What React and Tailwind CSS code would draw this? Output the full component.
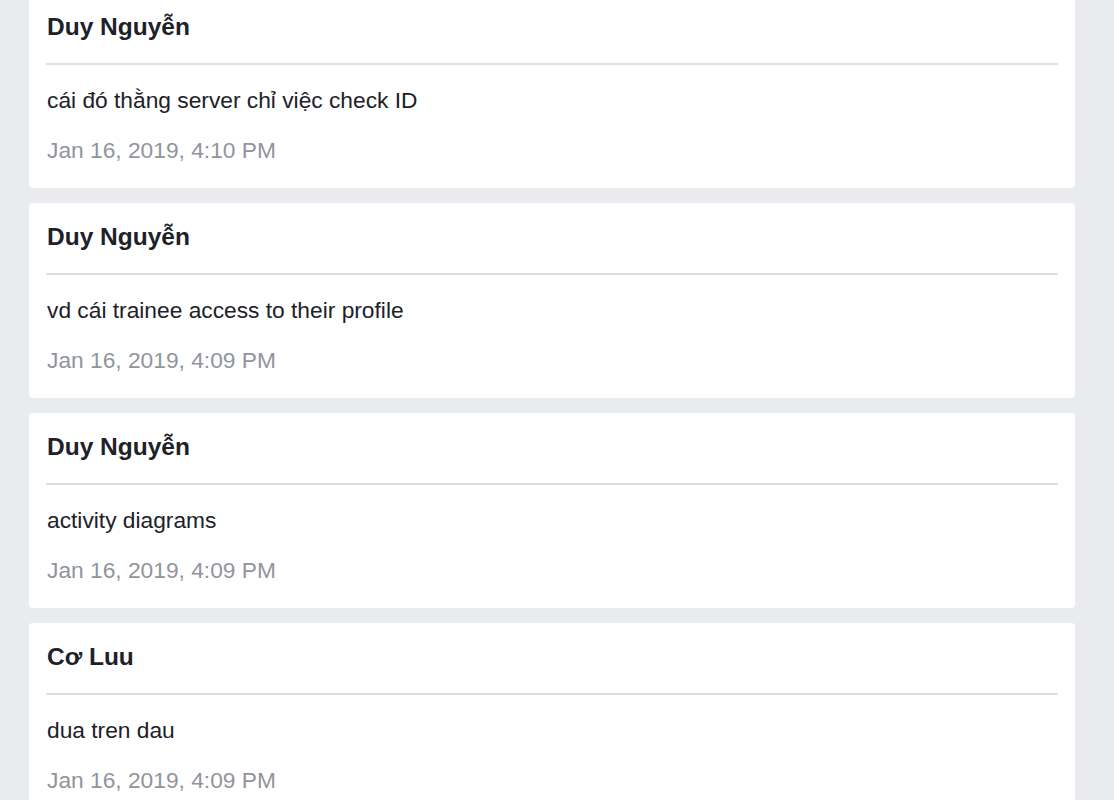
import React from 'react';

const messages = [
  { name: 'Duy Nguyễn', text: 'cái đó thằng server chỉ việc check ID', time: 'Jan 16, 2019, 4:10 PM' },
  { name: 'Duy Nguyễn', text: 'vd cái trainee access to their profile', time: 'Jan 16, 2019, 4:09 PM' },
  { name: 'Duy Nguyễn', text: 'activity diagrams', time: 'Jan 16, 2019, 4:09 PM' },
  { name: 'Cơ Luu', text: 'dua tren dau', time: 'Jan 16, 2019, 4:09 PM' },
];

function MessageCard({ name, text, time }) {
  return (
    <div className="bg-white rounded-[4px] px-[17px] pt-[20px] pb-[23px]">
      <div className="pl-px text-[24.5px] leading-[28px] font-bold text-[#1d2129]">{name}</div>
      <div className="mt-[22px] h-[2px] bg-[#dddfe2]" />
      <div className="pl-px mt-[20px] text-[22.75px] leading-[30px] text-[#1d2129]">{text}</div>
      <div className="pl-px mt-[20px] text-[22.75px] leading-[30px] text-[#90949c]">{time}</div>
    </div>
  );
}

export default function App() {
  return (
    <div
      className="h-[800px] overflow-hidden bg-[#e9ebee]"
      style={{ fontFamily: '"Liberation Sans", Arial, sans-serif' }}
    >
      <div className="ml-[29px] w-[1046px] -mt-[7px] flex flex-col gap-[15px]">
        {messages.map((m, i) => (
          <MessageCard key={i} {...m} />
        ))}
      </div>
    </div>
  );
}
